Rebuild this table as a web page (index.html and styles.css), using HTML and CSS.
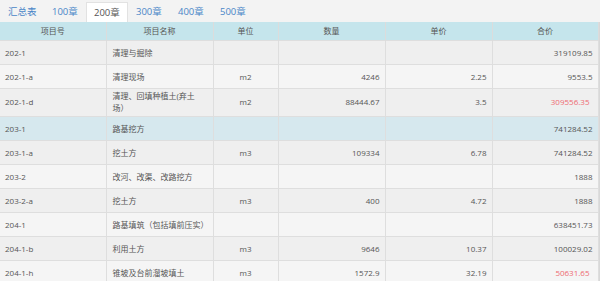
FILE: index.html
```html
<!DOCTYPE html>
<html lang="zh-CN">
<head>
  <meta charset="UTF-8"/>
  <title>清单</title>
  <link rel="stylesheet" href="styles.css">
</head>
<body>
  <div class="tabs">
    <div class="tab">汇总表</div>
    <div class="tab">100章</div>
    <div class="tab active">200章</div>
    <div class="tab">300章</div>
    <div class="tab">400章</div>
    <div class="tab">500章</div>
  </div>
  <div class="wrap">
    <table class="grid">
      <colgroup>
        <col class="c1"><col class="c2"><col class="c3"><col class="c4"><col class="c5"><col class="c6">
      </colgroup>
      <thead>
        <tr><th>项目号</th><th>项目名称</th><th>单位</th><th>数量</th><th>单价</th><th>合价</th></tr>
      </thead>
      <tbody>
        <tr><td>202-1</td><td class="name">清理与掘除</td><td class="unit"></td><td class="num"></td><td class="num"></td><td class="num">319109.85</td></tr>
        <tr><td>202-1-a</td><td class="name">清理现场</td><td class="unit">m2</td><td class="num">4246</td><td class="num">2.25</td><td class="num">9553.5</td></tr>
        <tr class="tall"><td>202-1-d</td><td class="name">清理、回填种植土(弃土<br>场）</td><td class="unit">m2</td><td class="num">88444.67</td><td class="num">3.5</td><td class="num red">309556.35</td></tr>
        <tr class="sel"><td>203-1</td><td class="name">路基挖方</td><td class="unit"></td><td class="num"></td><td class="num"></td><td class="num">741284.52</td></tr>
        <tr><td>203-1-a</td><td class="name">挖土方</td><td class="unit">m3</td><td class="num">109334</td><td class="num">6.78</td><td class="num">741284.52</td></tr>
        <tr><td>203-2</td><td class="name">改河、改渠、改路挖方</td><td class="unit"></td><td class="num"></td><td class="num"></td><td class="num">1888</td></tr>
        <tr><td>203-2-a</td><td class="name">挖土方</td><td class="unit">m3</td><td class="num">400</td><td class="num">4.72</td><td class="num">1888</td></tr>
        <tr><td>204-1</td><td class="name">路基填筑（包括填前压实）</td><td class="unit"></td><td class="num"></td><td class="num"></td><td class="num">638451.73</td></tr>
        <tr><td>204-1-b</td><td class="name">利用土方</td><td class="unit">m3</td><td class="num">9646</td><td class="num">10.37</td><td class="num">100029.02</td></tr>
        <tr><td>204-1-h</td><td class="name">锥坡及台前溜坡填土</td><td class="unit">m3</td><td class="num">1572.9</td><td class="num">32.19</td><td class="num red">50631.65</td></tr>
      </tbody>
    </table>
  </div>
</body>
</html>
```

FILE: styles.css
```css
* {
  box-sizing: border-box;
  margin: 0;
  padding: 0;
}

body {
  font-family: 'Open Sans', 'Noto Sans CJK SC', sans-serif;
  background: #f3f3f3;
  color: #555;
  width: 600px;
  height: 281px;
  overflow: hidden;
}

.tabs {
  display: flex;
  height: 22px;
  align-items: flex-end;
  background: #f3f3f3;
}

.tab {
  width: 42px;
  height: 20px;
  line-height: 20px;
  padding-left: 8px;
  font-size: 9.5px;
  color: #4a86c8;
  white-space: nowrap;
}

.tab:first-child {
  width: 44px;
}

.tab.active {
  background: #fff;
  color: #555;
  border: 1px solid #e2e2e2;
  border-bottom: none;
  padding-left: 7px;
}

.wrap {
  width: 600px;
  border-right: 2px solid #d8d8d8;
}

.grid {
  width: 598px;
  border-collapse: collapse;
  table-layout: fixed;
  font-size: 8px;
}

.c1 { width: 106px; }
.c2 { width: 107px; }
.c3 { width: 65px; }
.c4 { width: 107px; }
.c5 { width: 107px; }
.c6 { width: 106px; }

.grid th {
  height: 18px;
  background: #c5e5ec;
  font-weight: normal;
  color: #555;
  border-right: 1px solid #dcdcdc;
  text-align: center;
}

.grid td {
  height: 24px;
  border: 1px solid #dedede;
  border-left: none;
  padding: 0 5px;
  vertical-align: middle;
  white-space: nowrap;
}

.grid tbody tr:nth-child(odd) td {
  background: #efefef;
}

.grid tbody tr:nth-child(even) td {
  background: #f5f5f5;
}

.grid tbody tr.sel td {
  background: #d6e8ee;
}

.grid tr.tall td {
  height: 28px;
  line-height: 12px;
}

.grid td.name {
  padding-left: 6px;
}

.grid td.unit {
  text-align: center;
}

.grid td.num {
  text-align: right;
}

.grid td.red {
  color: #ee6b72;
  padding-right: 8px;
}
```
